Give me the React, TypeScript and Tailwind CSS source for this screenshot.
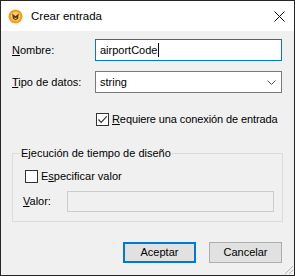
import React from "react";

function AppIcon() {
  return (
    <svg width="15" height="15" viewBox="0 0 15 15" className="shrink-0">
      <circle cx="7.5" cy="7.5" r="7" fill="#f5a11c" />
      <circle cx="7.5" cy="7.5" r="4.6" fill="#fcd27a" />
      <path d="M4.2 4.6 L7.5 7.2 L10.8 4.6 L10.2 9.8 L7.5 11.2 L4.8 9.8 Z" fill="#5a3a10" />
      <path d="M6.2 8.3 L7.5 9.3 L8.8 8.3 L8.5 9.6 L7.5 10.2 L6.5 9.6 Z" fill="#fcd27a" />
    </svg>
  );
}

function CloseIcon() {
  return (
    <svg width="11" height="11" viewBox="0 0 11 11">
      <path d="M0.5 0.5 L10.5 10.5 M10.5 0.5 L0.5 10.5" stroke="#111" strokeWidth="1" />
    </svg>
  );
}

function Chevron() {
  return (
    <svg width="9" height="5" viewBox="0 0 9 5">
      <path d="M0.5 0.5 L4.5 4.5 L8.5 0.5" stroke="#555555" strokeWidth="1" fill="none" />
    </svg>
  );
}

function Checkbox({ checked }: { checked: boolean }) {
  return (
    <div className="w-[13px] h-[13px] border border-[#333333] bg-white flex items-center justify-center shrink-0">
      {checked && (
        <svg width="11" height="11" viewBox="0 0 11 11">
          <path d="M1.5 5.5 L4.2 8.3 L9.7 2.3" stroke="#333333" strokeWidth="1.2" fill="none" />
        </svg>
      )}
    </div>
  );
}

function Grip() {
  return (
    <svg width="12" height="12" viewBox="0 0 12 12">
      <path d="M11 3 L3 11 M11 7 L7 11 M11 11 L11 11" stroke="#b5b5b5" strokeWidth="1" />
    </svg>
  );
}

export default function App() {
  return (
    <div className="w-[295px] h-[276px] border border-[#262626] flex flex-col bg-[#f0f0f0] font-['Liberation_Sans',Arial,sans-serif] text-[11px] leading-[13px] text-black overflow-hidden">
      <div className="h-[30px] bg-white flex items-center pl-[7px] pr-[9px] shrink-0">
        <AppIcon />
        <span className="ml-[8px] text-[11.5px]">Crear entrada</span>
        <div className="ml-auto flex items-center">
          <CloseIcon />
        </div>
      </div>
      <div className="flex-1 relative px-[11px] pt-[8px]">
        <div className="flex items-center h-[22px]">
          <div className="w-[83px]">
            <span className="underline">N</span>ombre:
          </div>
          <div className="w-[187px] h-[22px] border border-[#0078d7] bg-white pl-[4px] flex items-center">
            <span>airportCode</span>
            <span className="w-[1px] h-[14px] bg-black ml-[1px]" />
          </div>
        </div>
        <div className="flex items-center h-[22px] mt-[10px]">
          <div className="w-[83px]">
            <span className="underline">T</span>ipo de datos:
          </div>
          <div className="w-[187px] h-[22px] border border-[#7a7a7a] bg-white pl-[4px] pr-[5px] flex items-center justify-between">
            <span>string</span>
            <Chevron />
          </div>
        </div>
        <div className="flex items-center h-[13px] mt-[20px] pl-[84px]">
          <Checkbox checked />
          <span className="ml-[3px] tracking-[-0.1px]">
            <span className="underline">R</span>equiere una conexión de entrada
          </span>
        </div>
        <fieldset className="mt-[21px] w-[271px] border border-[#dcdcdc] pl-[7px] pr-[8px] pb-[9px]">
          <legend className="px-[1px] leading-[13px]">Ejecución de tiempo de diseño</legend>
          <div className="flex items-center h-[13px] mt-[10px] ml-[5px]">
            <Checkbox checked={false} />
            <span className="ml-[3px]">
              E<span className="underline">s</span>pecificar valor
            </span>
          </div>
          <div className="flex items-center mt-[8px] ml-[3px]">
            <div className="w-[44px]">
              <span className="underline">V</span>alor:
            </div>
            <div className="w-[207px] h-[21px] border border-[#cccccc] bg-[#f0f0f0]" />
          </div>
        </fieldset>
        <div className="flex justify-end gap-[13px] mt-[20px] mr-[1px]">
          <div className="w-[73px] h-[21px] border-2 border-[#0078d7] bg-[#e1e1e1] flex items-center justify-center">
            Aceptar
          </div>
          <div className="w-[73px] h-[21px] border border-[#adadad] bg-[#e1e1e1] flex items-center justify-center">
            Cancelar
          </div>
        </div>
        <div className="absolute right-0 bottom-0">
          <Grip />
        </div>
      </div>
    </div>
  );
}
